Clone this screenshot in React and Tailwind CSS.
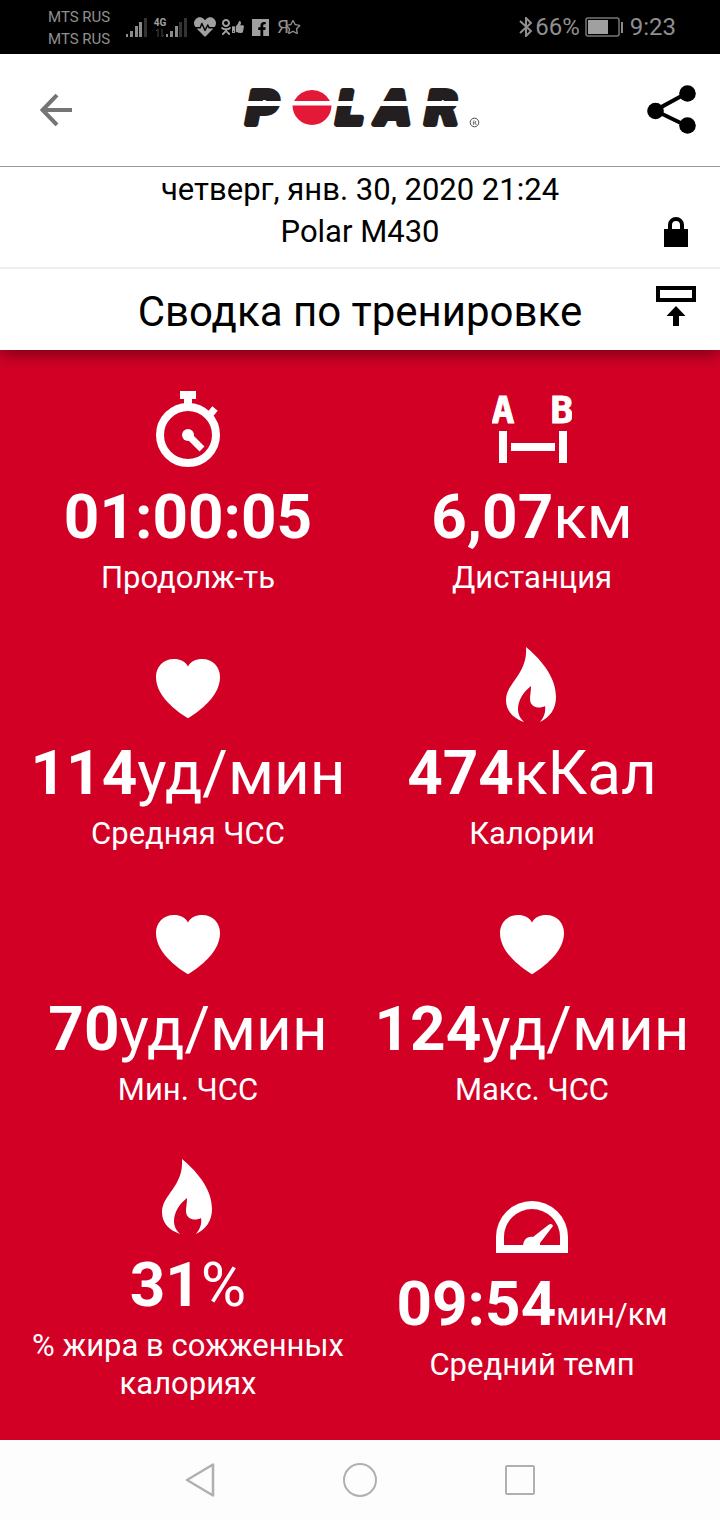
import { FaFacebookF, FaHeartbeat, FaOdnoklassniki, FaRegStar, FaThumbsUp } from 'react-icons/fa'

function SignalBars({ strong }) {
  return (
    <svg className="h-5 w-[21px]" viewBox="0 0 21 20" fill="#8c8c8c" aria-hidden="true">
      <rect x="0" y="17" width="2" height="3" />
      <rect x="4" y="14" width="3" height="6" />
      <rect x="9" y="9" width="3" height="11" />
      <rect x="13" y="5" width="3" height="15" fill={strong ? '#8c8c8c' : '#333'} />
      <rect x="18" y="1" width="3" height="19" fill="#333" />
    </svg>
  )
}

function StatusBar() {
  return (
    <div className="flex h-[54px] items-center justify-between bg-black pl-12 pr-11 text-[#8f8f8f]">
      <div className="flex items-center">
        <div className="w-[78px] pt-0.5 text-[15px] leading-[22px] whitespace-nowrap">
          <p>MTS RUS</p>
          <p>MTS RUS</p>
        </div>
        <SignalBars strong />
        <div className="ml-[7px] flex w-3 flex-col items-center">
          <span className="text-[10px] leading-3 font-bold text-[#a0a0a0]">4G</span>
          <svg className="h-2 w-2" viewBox="0 0 8 8" stroke="#444" fill="none" aria-hidden="true">
            <path d="M0 2 2 0V8M6 0V8L8 6" />
          </svg>
        </div>
        <SignalBars />
        <FaHeartbeat className="ml-[7px] h-[22px] w-[22px] text-[#a0a0a0]" />
        <FaOdnoklassniki className="ml-1 h-4 w-3 text-[#a0a0a0]" />
        <FaThumbsUp className="h-3 w-3 text-[#a0a0a0]" />
        <span className="ml-2 flex h-[17px] w-[17px] items-end justify-end bg-[#a0a0a0] pr-0.5 text-black">
          <FaFacebookF className="h-3.5 w-2.5" />
        </span>
        <span className="ml-2 text-[19px] leading-5">Я</span>
        <FaRegStar className="-ml-1 h-4 w-4" />
      </div>
      <div className="flex items-center text-2xl leading-7">
        <svg className="h-5 w-3.5" viewBox="0 0 14 20" fill="none" stroke="currentColor" strokeWidth="2" aria-hidden="true">
          <path d="M1 4 12 14 7 19V1L12 6 1 16" />
        </svg>
        <span className="ml-0.5">66%</span>
        <svg className="mr-1.5 ml-1 h-5 w-10" viewBox="0 0 40 20" aria-hidden="true">
          <rect x="2" y="1" width="33" height="18" rx="2" fill="none" stroke="#777" strokeWidth="1.5" />
          <rect x="4" y="3" width="20" height="14" fill="#a0a0a0" />
          <rect x="37" y="5" width="2" height="11" fill="#8c8c8c" />
        </svg>
        <span>9:23</span>
      </div>
    </div>
  )
}

function PolarLogo() {
  return (
    <svg
      className="h-[42px] w-60 overflow-visible"
      viewBox="0 0 240 42"
      role="img"
      aria-label="Polar"
      fontFamily="DejaVu Sans, sans-serif"
    >
      <defs>
        <linearGradient id="ink" gradientUnits="userSpaceOnUse" x1="0" y1="0" x2="0" y2="42">
          <stop offset="0.286" stopColor="#231f20" />
          <stop offset="0.286" stopColor="#fff" />
          <stop offset="0.393" stopColor="#fff" />
          <stop offset="0.393" stopColor="#231f20" />
        </linearGradient>
      </defs>
      <g fontSize="44" fontWeight="bold" fontStyle="italic" fill="url(#ink)" stroke="url(#ink)" strokeWidth="6" strokeLinejoin="round">
        <text x="6" y="35">P</text>
        <text x="96" y="35">L</text>
        <text x="137" y="35">A</text>
        <text x="185" y="35">R</text>
      </g>
      <path d="M54 12A20 19.500 0 0 1 90 12ZM52.500 16.500H91.500A19.500 19.500 0 1 1 52.500 16.500Z" fill="#e41937" />
      <circle cx="234.500" cy="33.500" r="4.300" fill="none" stroke="#231f20" strokeWidth="0.8" />
      <text x="232.500" y="36" fontSize="6" fill="#231f20">R</text>
    </svg>
  )
}

function Header() {
  return (
    <header className="grid h-[113px] grid-cols-[88px_1fr_88px] items-center border-b border-[#999]">
      <button type="button" aria-label="Назад" className="justify-self-end pr-4">
        <svg className="h-8 w-8" viewBox="0 0 32 32" fill="none" stroke="#757575" strokeWidth="4">
          <path d="M32 16H3M17 1 2.5 16 17 31" />
        </svg>
      </button>
      <div className="flex justify-center">
        <PolarLogo />
      </div>
      <button type="button" aria-label="Поделиться" className="justify-self-end pr-6 pb-0.5">
        <svg className="h-[49px] w-[49px]" viewBox="0 0 49 49">
          <path d="M40 8 8 25.5 40 41" fill="none" stroke="#000" strokeWidth="4" />
          <circle cx="40.5" cy="8.5" r="8.3" />
          <circle cx="8.5" cy="26" r="8.3" />
          <circle cx="40.5" cy="40.5" r="8.3" />
        </svg>
      </button>
    </header>
  )
}

function SessionInfo() {
  return (
    <div className="relative z-10 border-b-2 border-[#eee] bg-white pt-0.5 pb-3.5 text-center text-[31px] leading-[42px]">
      <p>четверг, янв. 30, 2020 21:24</p>
      <div className="grid grid-cols-[88px_1fr_88px] items-center">
        <p className="col-start-2">Polar M430</p>
        <svg className="h-[30px] w-6 justify-self-center" viewBox="0 0 24 30" role="img" aria-label="Закрыто">
          <path d="M0 12H24V30H0Z" />
          <path d="M6 14V8a6 6 0 0 1 12 0V14" fill="none" stroke="#000" strokeWidth="4" />
        </svg>
      </div>
    </div>
  )
}

function SectionTitle() {
  return (
    <div className="relative grid h-[81px] grid-cols-[88px_1fr_88px] items-center bg-white shadow-[0_4px_16px_rgba(0,0,0,0.45)]">
      <h1 className="col-start-2 pt-1 text-center text-[42px] leading-[50px] whitespace-nowrap">Сводка по тренировке</h1>
      <button type="button" aria-label="Свернуть" className="justify-self-center pb-2">
        <svg className="h-10 w-10" viewBox="0 0 40 40">
          <rect x="2" y="2" width="36" height="12" fill="none" stroke="#000" strokeWidth="4" />
          <path d="M20 20 29.5 30H23V40H17V30H10.5Z" />
        </svg>
      </button>
    </div>
  )
}

function IconBox({ children }) {
  return (
    <svg className="h-20 w-20" viewBox="0 0 80 80" fill="#fff" aria-hidden="true">
      {children}
    </svg>
  )
}

function StopwatchIcon() {
  return (
    <IconBox>
      <circle cx="40" cy="46" r="28" fill="none" stroke="#fff" strokeWidth="8" />
      <path d="M32 2H48V10H44V18H36V10H32Z" />
      <path d="M60 28 67 19.5M40 46 54 60" stroke="#fff" strokeWidth="7" />
      <circle cx="40" cy="46" r="6" />
    </IconBox>
  )
}

function DistanceIcon() {
  return (
    <IconBox>
      <g fontFamily="DejaVu Sans Mono, monospace" fontSize="38" fontWeight="bold" textAnchor="middle" stroke="#fff">
        <text x="11" y="34">A</text>
        <text x="70" y="34">B</text>
      </g>
      <rect x="7" y="42" width="8" height="32" />
      <rect x="67" y="42" width="8" height="32" />
      <rect x="19" y="54" width="44" height="8" />
    </IconBox>
  )
}

function HeartIcon() {
  return (
    <IconBox>
      <path d="M40 21.5C37 16 32 14 26 14 15 14 8 22 8 32 8 49 24 63 38 72Q40 74 42 72C56 63 72 49 72 32 72 22 65 14 54 14 48 14 43 16 40 21.5Z" />
    </IconBox>
  )
}

function FlameIcon() {
  return (
    <IconBox>
      <path d="M34 2C46 12 64 30 64 52 64 64 58 72 48 77 52 72 54 67 53 61 48 64 38 63 38 54 38 50 39 46 39 41 31 47 26 56 26 64 26 70 29 74 32 77 21 73 14 66 14 55 14 38 36 29 34 2Z" />
    </IconBox>
  )
}

function GaugeIcon() {
  return (
    <IconBox>
      <path fillRule="evenodd" d="M4 77V61A36 36 0 0 1 76 61V77ZM12 69H68V61A28 28 0 0 0 12 61Z" />
      <path d="M31 71C31 64 35 60 41 61L57 48.500Q60 47 61 50L48 67V71Z" />
    </IconBox>
  )
}

const stats = [
  { icon: StopwatchIcon, value: '01:00:05', label: 'Продолж-ть' },
  { icon: DistanceIcon, value: '6,07', unit: 'км', label: 'Дистанция' },
  { icon: HeartIcon, value: '114', unit: 'уд/мин', label: 'Средняя ЧСС' },
  { icon: FlameIcon, value: '474', unit: 'кКал', label: 'Калории' },
  { icon: HeartIcon, value: '70', unit: 'уд/мин', label: 'Мин. ЧСС' },
  { icon: HeartIcon, value: '124', unit: 'уд/мин', label: 'Макс. ЧСС' },
  { icon: FlameIcon, value: '31', unit: '%', label: '% жира в сожженных калориях' },
  { icon: GaugeIcon, value: '09:54', unit: 'мин/км', smallUnit: true, label: 'Средний темп' },
]

function Stat({ icon: Icon, value, unit, smallUnit, label }) {
  return (
    <div className="flex flex-col items-center text-center">
      <Icon />
      <p className="mt-2 text-[62px] leading-[80px] whitespace-nowrap">
        <span className="font-bold">{value}</span>
        {unit && <span className={smallUnit ? 'text-[31px] leading-none' : ''}>{unit}</span>}
      </p>
      <p className="mt-0.5 px-2 text-[31px] leading-[38px]">{label}</p>
    </div>
  )
}

function NavBar() {
  return (
    <nav className="flex h-20 items-center justify-center bg-[#fdfdfd]">
      <button type="button" aria-label="Назад" className="flex w-40 justify-center">
        <svg className="h-9 w-9" viewBox="0 0 36 36" fill="none" stroke="#b0b0b0" strokeWidth="2.5" strokeLinejoin="round">
          <path d="M31 2.500V33.500L5 18Z" />
        </svg>
      </button>
      <button type="button" aria-label="Домой" className="flex w-40 justify-center">
        <span className="h-[34px] w-[34px] rounded-full border-2 border-[#b0b0b0]" />
      </button>
      <button type="button" aria-label="Недавние" className="flex w-40 justify-center">
        <span className="h-[30px] w-[30px] rounded-xs border-2 border-[#b0b0b0]" />
      </button>
    </nav>
  )
}

export default function App() {
  return (
    <div className="bg-white font-[Roboto,sans-serif] text-black">
      <StatusBar />
      <Header />
      <SessionInfo />
      <SectionTitle />
      <main className="grid grid-cols-2 items-center gap-y-12 bg-[#d30026] px-4 pt-[39px] pb-[37px] text-white">
        {stats.map(s => (
          <Stat key={s.label} {...s} />
        ))}
      </main>
      <NavBar />
    </div>
  )
}
